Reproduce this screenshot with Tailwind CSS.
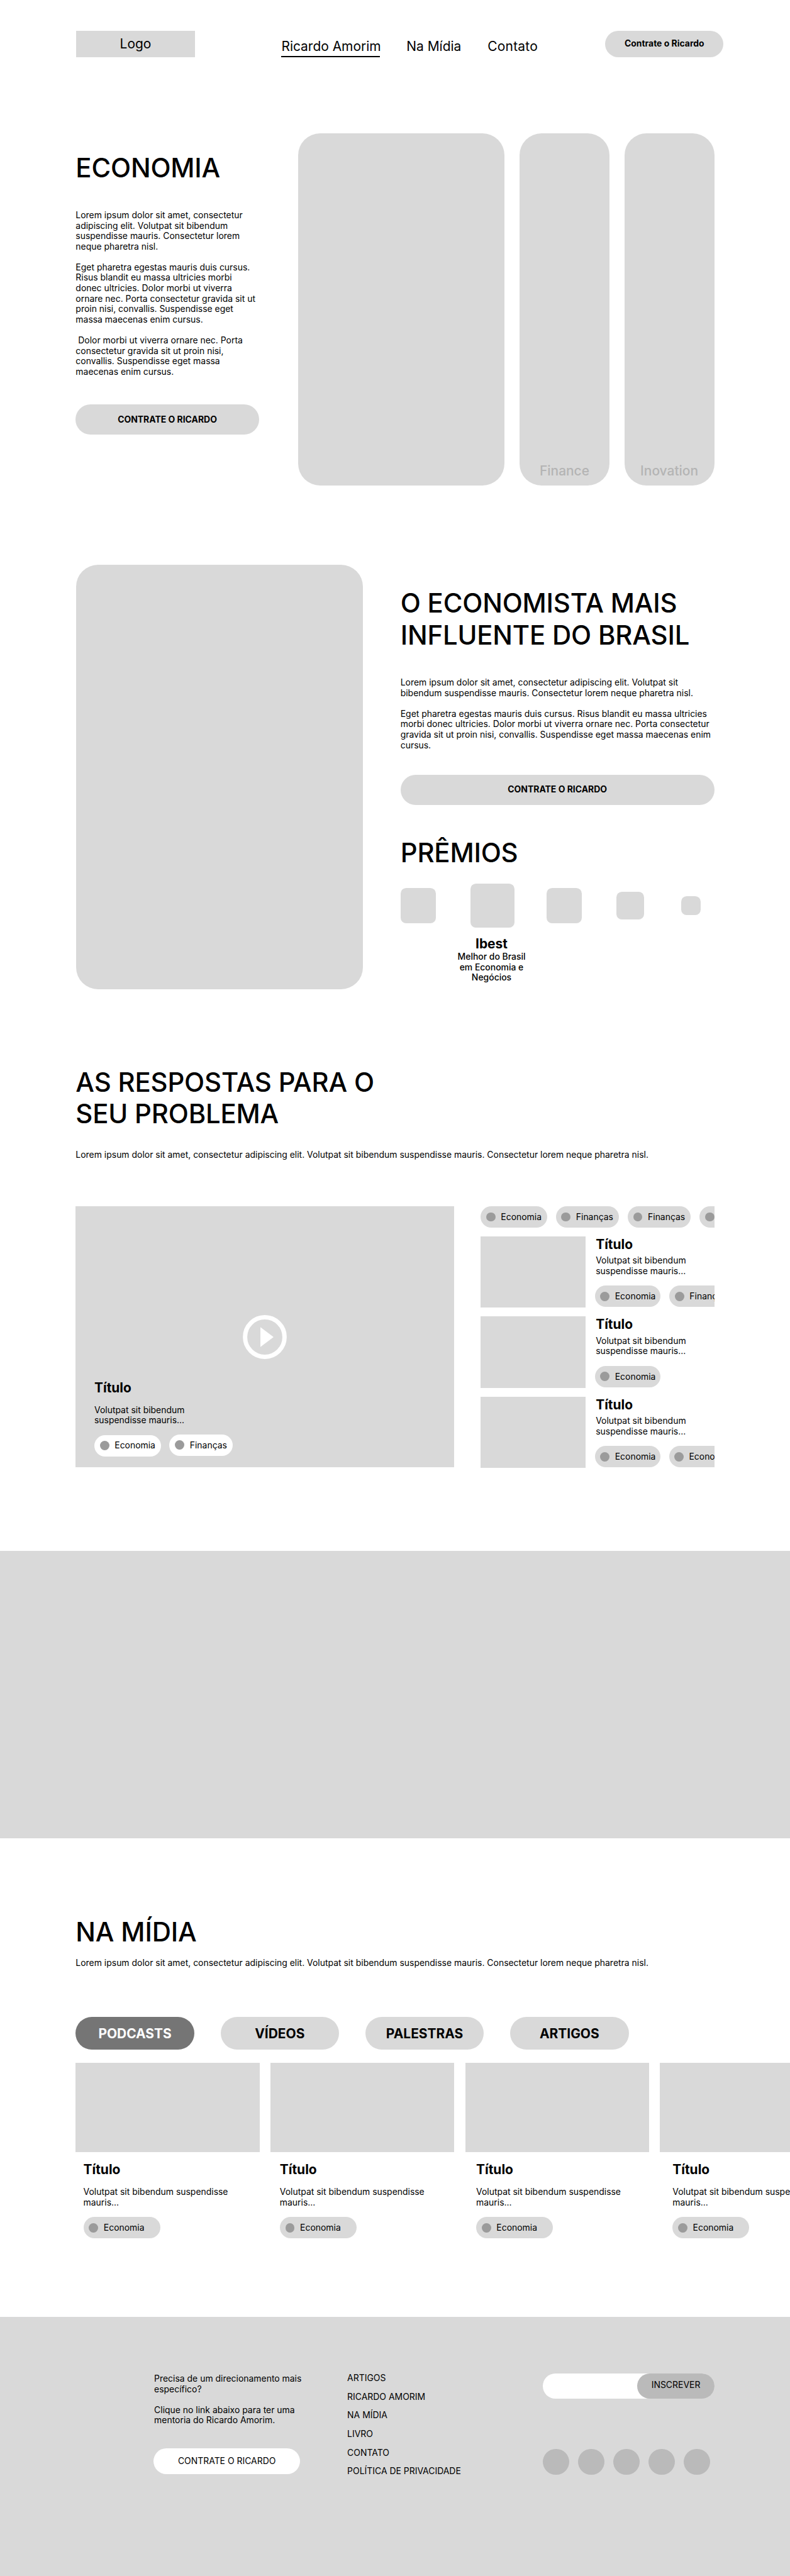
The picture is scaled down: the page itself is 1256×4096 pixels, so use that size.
<!DOCTYPE html>
<html lang="pt-BR" class="text-[13.9556px]">
<head>
<meta charset="utf-8">
<title>Ricardo Amorim</title>
<script src="https://cdn.jsdelivr.net/npm/@tailwindcss/browser@4"></script>
</head>
<body class="bg-white font-['Inter',sans-serif] text-[1rem]/[1.1875rem] text-black overflow-x-hidden">
<!-- Header -->
<header class="flex items-start pl-34.75 pt-14 h-60.75">
  <div class="flex h-12 w-54 items-center justify-center bg-[#d9d9d9] text-[1.5rem]/[1.8125rem]">Logo</div>
  <nav class="ml-39.5 flex gap-12 pt-3.5 text-[1.5rem]/[1.8125rem]">
    <a class="h-8.5 w-45 whitespace-nowrap border-b-2 border-black">Ricardo Amorim</a>
    <a class="w-25 whitespace-nowrap">Na Mídia</a>
    <a class="whitespace-nowrap tracking-[0.01em]">Contato</a>
  </nav>
  <a class="ml-auto mr-30.25 flex h-12 w-54 items-center justify-center rounded-full bg-[#d9d9d9] font-bold">Contrate o Ricardo</a>
</header>

<!-- Hero -->
<section class="flex h-196.5 items-start pl-34.5">
  <div class="w-83.5 pt-8.5">
    <h1 class="text-[3rem]/[3.625rem] font-medium tracking-[-0.004em]">ECONOMIA</h1>
    <div class="mt-12 flex flex-col gap-4.75">
      <p>Lorem ipsum dolor sit amet, consectetur adipiscing elit. Volutpat sit bibendum suspendisse mauris. Consectetur lorem neque pharetra nisl.</p>
      <p>Eget pharetra egestas mauris duis cursus. Risus blandit eu massa ultricies morbi donec ultricies. Dolor morbi ut viverra ornare nec. Porta consectetur gravida sit ut proin nisi, convallis. Suspendisse eget massa maecenas enim cursus.</p>
      <p>&nbsp;Dolor morbi ut viverra ornare nec. Porta consectetur gravida sit ut proin nisi, convallis. Suspendisse eget massa maecenas enim cursus.</p>
    </div>
    <a class="mt-12.5 flex h-13.75 items-center justify-center rounded-full bg-[#d9d9d9] font-bold">CONTRATE O RICARDO</a>
  </div>
  <div class="ml-18 flex h-160.5 gap-6.75 text-[1.5rem]/[1.8125rem] font-medium text-[#b4b4b4]">
    <div class="w-94 rounded-[2.5rem] bg-[#d9d9d9]"></div>
    <div class="flex w-41 items-end justify-center rounded-[2.5rem] bg-[#d9d9d9] pb-3">Finance</div>
    <div class="flex w-41 items-end justify-center rounded-[2.5rem] bg-[#d9d9d9] pb-3">Inovation</div>
  </div>
</section>

<!-- Sobre -->
<section class="flex h-228.75 items-start pl-34.75">
  <div class="h-193.5 w-130.75 rounded-[2.5rem] bg-[#d9d9d9]"></div>
  <div class="ml-17 w-143 pt-10.5">
    <h2 class="text-[3rem]/[3.625rem] font-medium tracking-[-0.004em]">O ECONOMISTA MAIS INFLUENTE DO BRASIL</h2>
    <div class="mt-12 flex flex-col gap-4.75">
      <p>Lorem ipsum dolor sit amet, consectetur adipiscing elit. Volutpat sit bibendum suspendisse mauris. Consectetur lorem neque pharetra nisl.</p>
      <p>Eget pharetra egestas mauris duis cursus. Risus blandit eu massa ultricies morbi donec ultricies. Dolor morbi ut viverra ornare nec. Porta consectetur gravida sit ut proin nisi, convallis. Suspendisse eget massa maecenas enim cursus.</p>
    </div>
    <a class="mt-11 flex h-13.75 items-center justify-center rounded-full bg-[#d9d9d9] font-bold">CONTRATE O RICARDO</a>
    <h2 class="mt-14.75 text-[3rem]/[3.625rem] font-medium tracking-[-0.004em]">PRÊMIOS</h2>
    <div class="mt-6.75 flex h-20 items-center">
      <div class="size-16.25 rounded-[0.625rem] bg-[#d9d9d9]"></div>
      <div class="ml-15.75 size-20 rounded-[0.625rem] bg-[#d9d9d9]"></div>
      <div class="ml-14.5 size-16.25 rounded-[0.625rem] bg-[#d9d9d9]"></div>
      <div class="ml-15.75 size-12.5 rounded-[0.625rem] bg-[#d9d9d9]"></div>
      <div class="ml-17 size-8.75 rounded-[0.625rem] bg-[#d9d9d9]"></div>
    </div>
    <div class="ml-25.25 mt-3.75 w-32.5 text-center">
      <h3 class="text-[1.5rem]/[1.8125rem] font-bold">Ibest</h3>
      <p class="font-medium">Melhor do Brasil em Economia e Negócios</p>
    </div>
  </div>
</section>

<!-- Respostas -->
<section class="h-220.75 pl-34.5">
  <h2 class="w-150 text-[3rem]/[3.625rem] font-medium tracking-[-0.004em]">AS RESPOSTAS PARA O SEU PROBLEMA</h2>
  <p class="mt-9 whitespace-nowrap">Lorem ipsum dolor sit amet, consectetur adipiscing elit. Volutpat sit bibendum suspendisse mauris. Consectetur lorem neque pharetra nisl.</p>
  <div class="mt-21 flex gap-12">
    <div class="relative flex h-119 w-172.5 flex-col justify-end bg-[#d9d9d9] pb-5 pl-8.5">
      <svg class="absolute left-1/2 top-1/2 size-24 -translate-1/2" viewBox="0 0 24 24" fill="none"><circle cx="12" cy="12" r="9" stroke="#fff" stroke-width="2"/><path d="M10 16.5l6-4.5-6-4.5z" fill="#fff"/></svg>
      <h3 class="text-[1.5rem]/[1.8125rem] font-bold">Título</h3>
      <p class="mt-4.25 w-45">Volutpat sit bibendum suspendisse mauris...</p>
      <div class="mt-4 flex items-start gap-4">
        <span class="mt-0.25 flex h-9.75 w-30.25 items-center gap-2.5 rounded-full bg-white pl-2.5"><i class="size-4.25 rounded-full bg-[#9b9b9b]"></i>Economia</span>
        <span class="flex h-9.75 w-28.75 items-center gap-2.5 rounded-full bg-white pl-2.5"><i class="size-4.25 rounded-full bg-[#9b9b9b]"></i>Finanças</span>
      </div>
    </div>
    <div class="flex w-106.5 flex-col gap-4 overflow-hidden">
      <div class="flex gap-4">
        <span class="flex h-9.75 w-30.25 shrink-0 items-center gap-2.5 rounded-full bg-[#d9d9d9] pl-2.5"><i class="size-4.25 rounded-full bg-[#9b9b9b]"></i>Economia</span>
        <span class="flex h-9.75 w-28.75 shrink-0 items-center gap-2.5 rounded-full bg-[#d9d9d9] pl-2.5"><i class="size-4.25 rounded-full bg-[#9b9b9b]"></i>Finanças</span>
        <span class="flex h-9.75 w-28.75 shrink-0 items-center gap-2.5 rounded-full bg-[#d9d9d9] pl-2.5"><i class="size-4.25 rounded-full bg-[#9b9b9b]"></i>Finanças</span>
        <span class="flex h-9.75 w-28.75 shrink-0 items-center rounded-full bg-[#d9d9d9] pl-2.5"><i class="size-4.25 rounded-full bg-[#9b9b9b]"></i></span>
      </div>
      <article class="flex h-32.5 gap-4.5">
        <div class="w-47.75 shrink-0 bg-[#d9d9d9]"></div>
        <div class="shrink-0">
          <h3 class="pl-0.25 text-[1.5rem]/[1.8125rem] font-bold">Título</h3>
          <p class="mt-1.5 w-45 pl-0.25">Volutpat sit bibendum suspendisse mauris...</p>
          <div class="mt-4.25 flex gap-4">
            <span class="flex h-9.75 w-29.75 items-center gap-2.5 rounded-full bg-[#d9d9d9] pl-2.25"><i class="size-4.25 rounded-full bg-[#9b9b9b]"></i>Economia</span>
            <span class="flex h-9.75 w-28.75 items-center gap-2.5 rounded-full bg-[#d9d9d9] pl-2.5"><i class="size-4.25 rounded-full bg-[#9b9b9b]"></i>Finanças</span>
          </div>
        </div>
      </article>
      <article class="flex h-32.5 gap-4.5">
        <div class="w-47.75 shrink-0 bg-[#d9d9d9]"></div>
        <div class="shrink-0">
          <h3 class="pl-0.25 text-[1.5rem]/[1.8125rem] font-bold">Título</h3>
          <p class="mt-1.5 w-45 pl-0.25">Volutpat sit bibendum suspendisse mauris...</p>
          <div class="mt-4.25 flex gap-4">
            <span class="flex h-9.75 w-29.75 items-center gap-2.5 rounded-full bg-[#d9d9d9] pl-2.25"><i class="size-4.25 rounded-full bg-[#9b9b9b]"></i>Economia</span>
          </div>
        </div>
      </article>
      <article class="flex h-32.5 gap-4.5">
        <div class="w-47.75 shrink-0 bg-[#d9d9d9]"></div>
        <div class="shrink-0">
          <h3 class="pl-0.25 text-[1.5rem]/[1.8125rem] font-bold">Título</h3>
          <p class="mt-1.5 w-45 pl-0.25">Volutpat sit bibendum suspendisse mauris...</p>
          <div class="mt-4.25 flex gap-4">
            <span class="flex h-9.75 w-29.75 items-center gap-2.5 rounded-full bg-[#d9d9d9] pl-2.25"><i class="size-4.25 rounded-full bg-[#9b9b9b]"></i>Economia</span>
            <span class="flex h-9.75 w-29.75 items-center gap-2.5 rounded-full bg-[#d9d9d9] pl-2.25"><i class="size-4.25 rounded-full bg-[#9b9b9b]"></i>Economia</span>
          </div>
        </div>
      </article>
    </div>
  </div>
</section>

<!-- Banner -->
<div class="h-131 bg-[#d9d9d9]"></div>

<!-- Na mídia -->
<section class="h-218.25 overflow-hidden pl-34.5 pt-35.5">
  <h2 class="text-[3rem]/[3.625rem] font-medium tracking-[-0.004em]">NA MÍDIA</h2>
  <p class="mt-4.5 whitespace-nowrap">Lorem ipsum dolor sit amet, consectetur adipiscing elit. Volutpat sit bibendum suspendisse mauris. Consectetur lorem neque pharetra nisl.</p>
  <div class="mt-22.25 flex gap-12 text-[1.5rem]/[1.8125rem] font-bold">
    <a class="flex h-15 w-54 items-center justify-center rounded-full bg-[#757575] text-white">PODCASTS</a>
    <a class="flex h-15 w-54 items-center justify-center rounded-full bg-[#d9d9d9]">VÍDEOS</a>
    <a class="flex h-15 w-54 items-center justify-center rounded-full bg-[#d9d9d9]">PALESTRAS</a>
    <a class="flex h-15 w-54 items-center justify-center rounded-full bg-[#d9d9d9]">ARTIGOS</a>
  </div>
  <div class="mt-6 flex gap-5">
    <div class="h-40.5 w-83.75 shrink-0 bg-[#d9d9d9]"></div>
    <div class="h-40.5 w-83.75 shrink-0 bg-[#d9d9d9]"></div>
    <div class="h-40.5 w-83.75 shrink-0 bg-[#d9d9d9]"></div>
    <div class="h-40.5 w-83.75 shrink-0 bg-[#d9d9d9]"></div>
  </div>
  <div class="ml-3.5 mt-4.5 flex gap-22">
    <article class="w-67.5 shrink-0">
      <h3 class="text-[1.5rem]/[1.8125rem] font-bold">Título</h3>
      <p class="mt-4.25">Volutpat sit bibendum suspendisse mauris...</p>
      <span class="mt-4.25 flex h-9.75 w-35 items-center gap-2.5 rounded-full bg-[#d9d9d9] pl-2.5"><i class="size-4.25 rounded-full bg-[#9b9b9b]"></i>Economia</span>
    </article>
    <article class="w-67.5 shrink-0">
      <h3 class="text-[1.5rem]/[1.8125rem] font-bold">Título</h3>
      <p class="mt-4.25">Volutpat sit bibendum suspendisse mauris...</p>
      <span class="mt-4.25 flex h-9.75 w-35 items-center gap-2.5 rounded-full bg-[#d9d9d9] pl-2.5"><i class="size-4.25 rounded-full bg-[#9b9b9b]"></i>Economia</span>
    </article>
    <article class="w-67.5 shrink-0">
      <h3 class="text-[1.5rem]/[1.8125rem] font-bold">Título</h3>
      <p class="mt-4.25">Volutpat sit bibendum suspendisse mauris...</p>
      <span class="mt-4.25 flex h-9.75 w-35 items-center gap-2.5 rounded-full bg-[#d9d9d9] pl-2.5"><i class="size-4.25 rounded-full bg-[#9b9b9b]"></i>Economia</span>
    </article>
    <article class="w-67.5 shrink-0">
      <h3 class="text-[1.5rem]/[1.8125rem] font-bold">Título</h3>
      <p class="mt-4.25">Volutpat sit bibendum suspendisse mauris...</p>
      <span class="mt-4.25 flex h-9.75 w-35 items-center gap-2.5 rounded-full bg-[#d9d9d9] pl-2.5"><i class="size-4.25 rounded-full bg-[#9b9b9b]"></i>Economia</span>
    </article>
  </div>
</section>

<!-- Rodapé -->
<footer class="flex h-118.25 items-start bg-[#d9d9d9] pl-70 pt-25.5">
  <div class="w-72">
    <div class="flex flex-col gap-4.75 pl-0.25 pt-0.25">
      <p>Precisa de um direcionamento mais específico?</p>
      <p>Clique no link abaixo para ter uma mentoria do Ricardo Amorim.</p>
    </div>
    <a class="mt-10.25 flex h-11.75 w-66.75 items-center justify-center rounded-full bg-white">CONTRATE O RICARDO</a>
  </div>
  <nav class="ml-16.25 flex w-69.75 flex-col gap-3.75">
    <a>ARTIGOS</a>
    <a>RICARDO AMORIM</a>
    <a>NA MÍDIA</a>
    <a>LIVRO</a>
    <a>CONTATO</a>
    <a>POLÍTICA DE PRIVACIDADE</a>
  </nav>
  <div class="ml-19.5 w-78 pt-0.25">
    <div class="flex h-11.5 justify-end rounded-full bg-white">
      <a class="flex w-35 items-center justify-center rounded-full bg-[#bababa] pb-1">INSCREVER</a>
    </div>
    <div class="mt-22.75 flex gap-4">
      <i class="size-12 rounded-full bg-[#bababa]"></i>
      <i class="size-12 rounded-full bg-[#bababa]"></i>
      <i class="size-12 rounded-full bg-[#bababa]"></i>
      <i class="size-12 rounded-full bg-[#bababa]"></i>
      <i class="size-12 rounded-full bg-[#bababa]"></i>
    </div>
  </div>
</footer>
</body>
</html>
